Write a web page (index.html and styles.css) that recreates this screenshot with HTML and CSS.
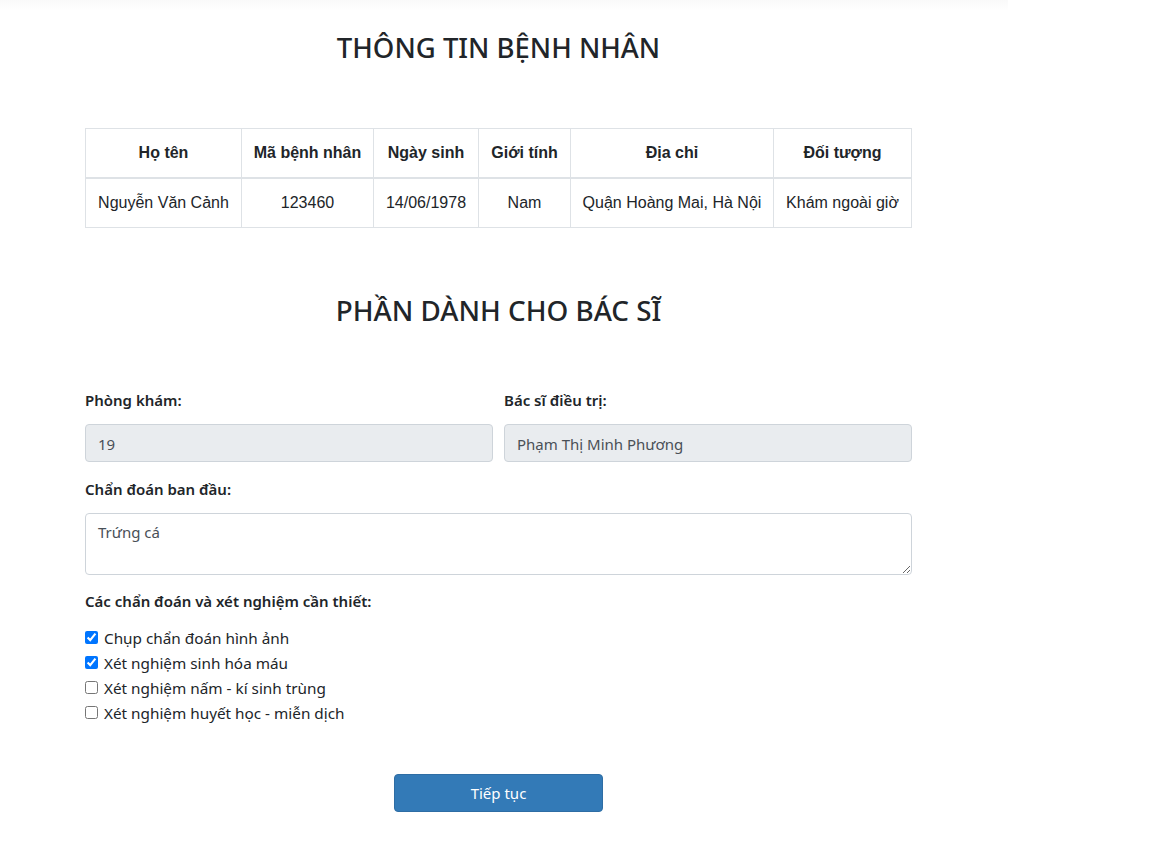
FILE: index.html
```html
<!DOCTYPE html>
<html lang="vi">
<head>
<meta charset="utf-8">
<title>Thông tin bệnh nhân</title>
<link rel="stylesheet" href="styles.css">
</head>
<body>
<div class="topbar"></div>
<main class="page">
  <h3 class="title">THÔNG TIN BỆNH NHÂN</h3>
  <table class="info">
    <thead>
      <tr>
        <th class="c1">Họ tên</th>
        <th class="c2">Mã bệnh nhân</th>
        <th class="c3">Ngày sinh</th>
        <th class="c4">Giới tính</th>
        <th class="c5">Địa chỉ</th>
        <th class="c6">Đối tượng</th>
      </tr>
    </thead>
    <tbody>
      <tr>
        <td>Nguyễn Văn Cảnh</td>
        <td>123460</td>
        <td>14/06/1978</td>
        <td>Nam</td>
        <td>Quận Hoàng Mai, Hà Nội</td>
        <td>Khám ngoài giờ</td>
      </tr>
    </tbody>
  </table>

  <h3 class="title title-2">PHẦN DÀNH CHO BÁC SĨ</h3>

  <form class="form">
    <div class="row">
      <div class="field">
        <label class="label">Phòng khám:</label>
        <input class="control" type="text" value="19" readonly>
      </div>
      <div class="field">
        <label class="label">Bác sĩ điều trị:</label>
        <input class="control" type="text" value="Phạm Thị Minh Phương" readonly>
      </div>
    </div>
    <div class="field field-diag">
      <label class="label">Chẩn đoán ban đầu:</label>
      <textarea class="control area">Trứng cá</textarea>
    </div>
    <div class="field field-checks">
      <label class="label">Các chẩn đoán và xét nghiệm cần thiết:</label>
      <div class="checks">
        <label class="check"><input type="checkbox" checked> Chụp chẩn đoán hình ảnh</label>
        <label class="check"><input type="checkbox" checked> Xét nghiệm sinh hóa máu</label>
        <label class="check"><input type="checkbox"> Xét nghiệm nấm - kí sinh trùng</label>
        <label class="check"><input type="checkbox"> Xét nghiệm huyết học - miễn dịch</label>
      </div>
    </div>
    <div class="actions">
      <button type="button" class="btn">Tiếp tục</button>
    </div>
  </form>
</main>
</body>
</html>
```
FILE: styles.css
```css
* { box-sizing: border-box; }

body {
  margin: 0;
  background: #fff;
  color: #212529;
  font-family: "Noto Sans", "Open Sans", sans-serif;
  font-size: 15px;
}

.topbar {
  width: 1008px;
  height: 10px;
  background: linear-gradient(#f9f9f9, #fefefe);
}

.page {
  width: 827px;
  margin-left: 85px;
}

.title {
  margin: 21px 0 0;
  font-size: 27.5px;
  font-weight: 500;
  line-height: 34px;
  text-align: center;
  color: #212529;
}

.title-2 { margin-top: 65px; font-size: 27.8px; }

.info {
  margin-top: 63px;
  border-collapse: collapse;
  font-family: "Liberation Sans", Arial, sans-serif;
  font-size: 16px;
  line-height: 24px;
  width: 826px;
  table-layout: fixed;
}

.info th, .info td {
  border: 1px solid #dee2e6;
  padding: 12px 6px;
  text-align: center;
  white-space: nowrap;
  color: #212529;
}

.info th { font-weight: bold; border-bottom: 2px solid #dee2e6; }

.c1 { width: 156px; }
.c2 { width: 132px; }
.c3 { width: 105px; }
.c4 { width: 92px; }
.c5 { width: 203px; }
.c6 { width: 138px; }

.form { margin-top: 61px; }

.row {
  display: grid;
  grid-template-columns: 1fr 1fr;
  gap: 11px;
}

.field { display: flex; flex-direction: column; }

.label {
  font-weight: 600;
  font-size: 15px;
  line-height: 24px;
  margin-bottom: 12px;
  color: #212529;
}

.control {
  height: 38px;
  border: 1px solid #ced4da;
  border-radius: 4px;
  padding: 2px 12px 0;
  font-family: inherit;
  font-size: 15px;
  color: #495057;
  background: #e9ecef;
  outline: none;
}

.area {
  height: 62px;
  background: #fff;
  padding: 7px 12px;
  line-height: 22px;
  resize: vertical;
}

.field-diag { margin-top: 15px; }
.field-checks { margin-top: 14px; }
.field-checks .label { margin-bottom: 12px; }

.checks { display: flex; flex-direction: column; }

.check {
  display: flex;
  align-items: center;
  height: 25px;
  font-size: 15.3px;
  color: #212529;
}

.check input {
  width: 13px;
  height: 13px;
  margin: 0 6px 0 0;
  accent-color: #0075ff;
}

.actions {
  display: flex;
  justify-content: center;
  margin-top: 49px;
}

.btn {
  width: 209px;
  height: 38px;
  background: #337ab7;
  border: 1px solid #2e6da4;
  border-radius: 4px;
  color: #fff;
  font-family: inherit;
  font-size: 15px;
}
```
